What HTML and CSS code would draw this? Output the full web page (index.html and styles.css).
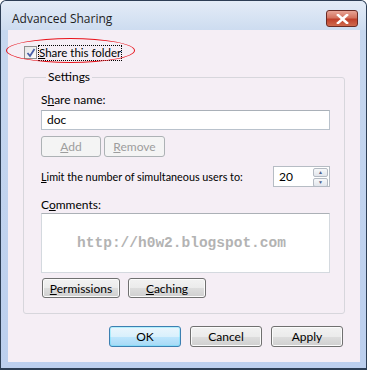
FILE: index.html
```html
<!DOCTYPE html>
<html lang="en">
  <head>
    <meta charset="UTF-8" />
    <title>Advanced Sharing</title>
    <link rel="stylesheet" href="styles.css">
  </head>
  <body>
    <div class="window">
      <div class="titlebar">
        <span class="title">Advanced Sharing</span>
        <button class="close-btn" aria-label="Close">
          <svg width="13" height="10" viewBox="0 0 13 10">
            <path d="M2 1 L11 9 M11 1 L2 9" stroke="#fff" stroke-width="2.6" stroke-linecap="square" fill="none"/>
          </svg>
        </button>
      </div>
      <div class="client">
        <div class="share-row">
          <span class="checkbox">
            <svg width="10" height="10" viewBox="0 0 10 10">
              <path d="M1.5 5 L4 8 L8.5 1" stroke="#4a5fa8" stroke-width="1.8" fill="none"/>
            </svg>
          </span>
          <span class="focus-label"><u>S</u>hare this folder</span>
          <span class="highlight"></span>
        </div>

        <fieldset class="group">
          <legend>Settings</legend>
          <label class="field-label">S<u>h</u>are name:</label>
          <div class="textbox">doc</div>
          <div class="btn-row">
            <button class="button disabled"><u>A</u>dd</button>
            <button class="button disabled wide"><u>R</u>emove</button>
          </div>
          <div class="limit-row">
            <span><u>L</u>imit the number of simultaneous users to:</span>
            <div class="spin">
              <span class="spin-value">20</span>
              <span class="spin-arrows">
                <span class="arrow">&#9650;</span>
                <span class="arrow">&#9660;</span>
              </span>
            </div>
          </div>
          <label class="field-label comments-label">C<u>o</u>mments:</label>
          <div class="textarea">http://h0w2.blogspot.com</div>
          <div class="btn-row bottom">
            <button class="button long"><u>P</u>ermissions</button>
            <button class="button long"><u>C</u>aching</button>
          </div>
        </fieldset>

        <div class="dialog-buttons">
          <button class="button main default">OK</button>
          <button class="button main">Cancel</button>
          <button class="button main">Apply</button>
        </div>
      </div>
    </div>
  </body>
</html>
```

FILE: styles.css
```css
body {
  margin: 0;
  background: #fff;
  font-family: "Lato", "Liberation Sans", sans-serif;
  font-size: 11px;
  color: #000;
}
u {
  text-decoration: underline;
  text-underline-offset: 1px;
}
.window {
  width: 367px;
  height: 370px;
  box-sizing: border-box;
  border: 1px solid #2d3e55;
  border-bottom: 2px solid #2d3e55;
  border-radius: 6px 6px 0 0;
  background: linear-gradient(to bottom, #d8e4f4 0px, #c6d7ef 30px, #bccfee 100%);
  display: flex;
  flex-direction: column;
  box-shadow: 0 1px 0 #3fd5e8;
}
.titlebar {
  height: 29px;
  display: flex;
  align-items: flex-start;
  justify-content: space-between;
  padding: 0 8px 0 11px;
  background: linear-gradient(to bottom, #e4ecf7, #cddcf0);
  border-radius: 6px 6px 0 0;
}
.title {
  font-family: "Open Sans", sans-serif;
  font-size: 12px;
  margin-top: 9px;
  color: #1e1e1e;
}
.close-btn {
  margin-top: 9px;
  width: 32px;
  height: 17px;
  border: 1px solid #6a2b25;
  border-radius: 3px;
  background: linear-gradient(to bottom, #e8a496 0%, #d4735f 45%, #c0402b 55%, #cf6a4e 100%);
  display: flex;
  align-items: center;
  justify-content: center;
  padding: 0;
}
.client {
  margin: 0 6px 0 7px;
  height: 332px;
  background: #f5eef5;
  position: relative;
  padding: 14px 15px 0 15px;
  box-sizing: border-box;
}
.share-row {
  display: flex;
  align-items: center;
  height: 17px;
  padding-left: 1px;
  position: relative;
}
.checkbox {
  width: 11px;
  height: 11px;
  border: 1px solid #8f8f8f;
  background: linear-gradient(to bottom right, #e5e5e5, #fbfbfb);
  display: flex;
  align-items: center;
  justify-content: center;
}
.focus-label {
  margin-left: 1px;
  padding: 0 1px;
  outline: 1px dotted #000;
  outline-offset: -1px;
  line-height: 16px;
  font-size: 11.5px;
}
.highlight {
  position: absolute;
  left: -17px;
  top: -6px;
  width: 127px;
  height: 23px;
  border: 1.5px solid #e8131c;
  border-radius: 50%;
}
.group {
  margin: 8px 0 0 0;
  border: 1px solid #d7d6dc;
  border-radius: 3px;
  padding: 0 14px 15px 17px;
  min-width: 0;
}
.group legend {
  padding: 0 2px;
  margin-left: 5px;
  line-height: 16px;
  font-size: 12px;
}
.field-label {
  display: block;
  margin-top: 8px;
  line-height: 14px;
  font-size: 12px;
}
.textbox {
  margin-top: 3px;
  height: 18px;
  border: 1px solid #b9c2cc;
  border-top-color: #a9b0b8;
  background: #fff;
  padding-left: 5px;
  line-height: 18px;
  font-size: 12px;
}
.btn-row {
  display: flex;
  gap: 3px;
  margin-top: 6px;
}
.button {
  font-family: inherit;
  font-size: 12px;
  height: 21px;
  border: 1px solid #707070;
  border-radius: 3px;
  background: linear-gradient(to bottom, #f2f2f2 0%, #ebebeb 50%, #dddddd 51%, #cfcfcf 100%);
  color: #000;
  padding: 0;
  box-shadow: inset 0 0 0 1px #fbfbfb;
}
.button.disabled {
  width: 60px;
  border-color: #adb2b5;
  background: #f4f4f4;
  color: #9d9d9d;
  box-shadow: none;
}
.button.wide {
  width: 61px;
}
.limit-row {
  display: flex;
  justify-content: space-between;
  align-items: center;
  margin-top: 9px;
  font-size: 10.8px;
}
.spin {
  width: 57px;
  height: 21px;
  box-sizing: border-box;
  border: 1px solid #b6bcc4;
  background: #fff;
  display: flex;
  justify-content: space-between;
}
.spin-value {
  padding-left: 5px;
  line-height: 20px;
  font-size: 12px;
}
.spin-arrows {
  width: 15px;
  display: flex;
  flex-direction: column;
  gap: 1px;
  padding: 1px;
}
.arrow {
  flex: 1;
  border: 1px solid #b4bac3;
  border-radius: 2px;
  background: linear-gradient(to bottom, #f7f8fa, #e2e6ec);
  color: #4f5f8c;
  font-size: 5px;
  line-height: 7px;
  text-align: center;
}
.comments-label {
  margin-top: 11px;
}
.textarea {
  margin-top: 1px;
  height: 58px;
  border: 1px solid #d4d9df;
  border-top-color: #abb0b6;
  background: #fff;
  display: flex;
  align-items: center;
  justify-content: center;
  padding-right: 8px;
  font-family: "Liberation Mono", monospace;
  font-weight: bold;
  font-size: 14.5px;
  color: #b3b3b3;
}
.btn-row.bottom {
  gap: 8px;
  margin-top: 5px;
  padding-left: 1px;
}
.button.long {
  width: 78px;
  height: 20px;
}
.dialog-buttons {
  display: flex;
  justify-content: flex-end;
  gap: 9px;
  margin-top: 12px;
  padding-right: 2px;
}
.button.main {
  width: 72px;
  height: 21px;
}
.button.default {
  border-color: #3c7fb1;
  background: linear-gradient(to bottom, #eaf6fd 0%, #d9f0fc 50%, #bee6fd 51%, #a7d9f5 100%);
  box-shadow: inset 0 0 0 1px #48e0fb55;
}
```
